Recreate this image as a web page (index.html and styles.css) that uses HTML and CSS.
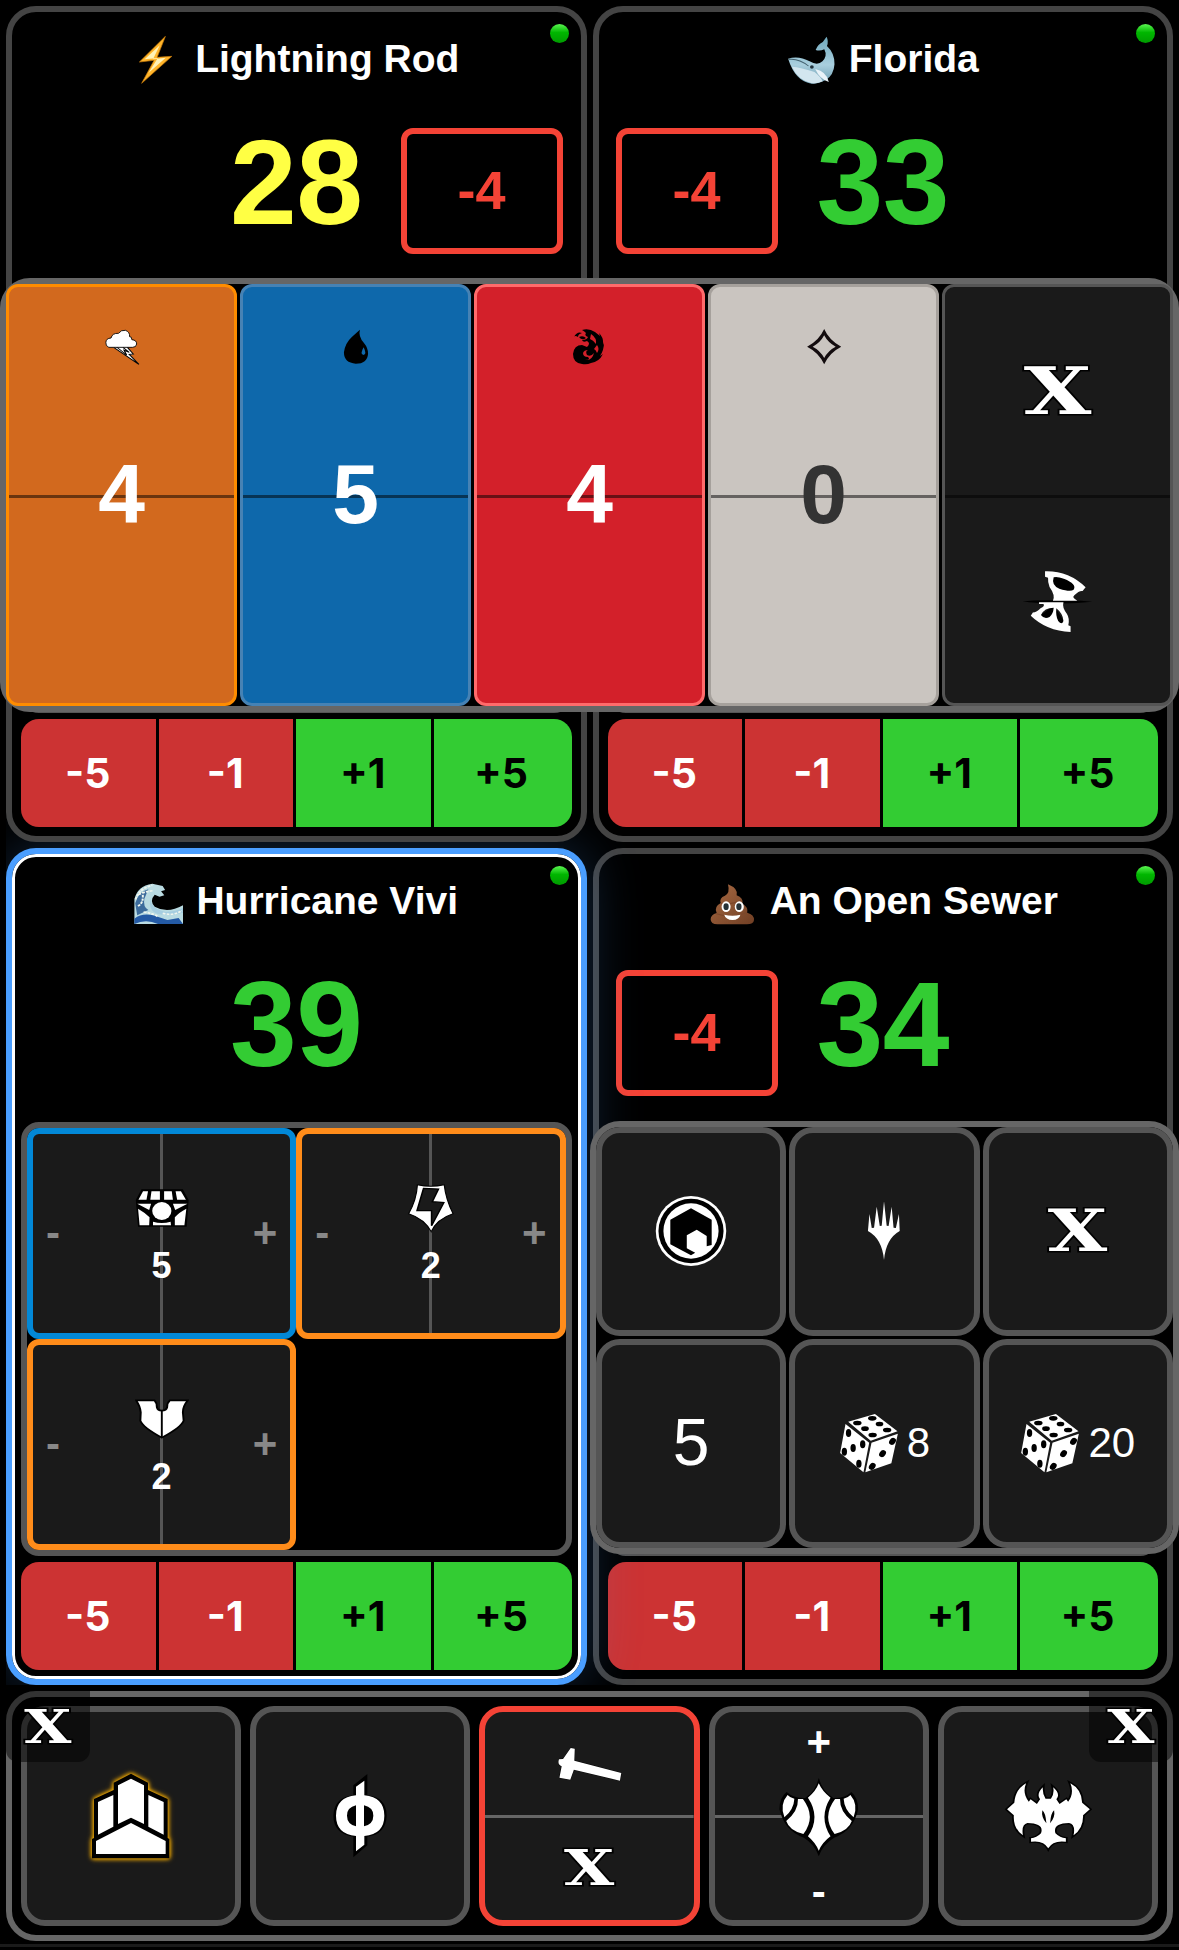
FILE: index.html
```html
<!DOCTYPE html>
<html lang="en">
<head>
<meta charset="utf-8">
<title>Life Counter</title>
<link rel="stylesheet" href="styles.css">
</head>
<body>
<div class="page">
  <main class="table">
    <section class="panel front">
      <span class="status"></span>
      <header class="name">
        <svg class="emoji" viewBox="358 108 130 144" preserveAspectRatio="none"><path d="M444 109L375 186L414 181L381 250L461 169L422 172Z" fill="#ffb52b" stroke="#c87a08" stroke-width="2"/><path d="M429 136L389 178L424 174L399 219L445 173L411 178Z" fill="#fff3b8"/></svg>
        <span>Lightning Rod</span>
      </header>
      <div class="life-row"><b class="life warn">28</b><div class="delta right">-4</div></div>
      <div class="counters"></div>
      <div class="controls"><button class="minus">-5</button><button class="minus">-1</button><button class="plus">+1</button><button class="plus">+5</button></div>
    </section>

    <section class="panel front">
      <span class="status"></span>
      <header class="name">
        <svg class="emoji" viewBox="523 108 130 144" preserveAspectRatio="none">
          <defs><linearGradient id="whale" x1="0" y1="0" x2="0" y2="1"><stop offset="0" stop-color="#6fa9bd"/><stop offset=".6" stop-color="#a9cfde"/><stop offset="1" stop-color="#6d9cb0"/></linearGradient></defs>
          <path d="M526 176Q554 166 583 184Q604 198 617 184Q631 168 622 148Q610 154 599 150Q604 134 618 126L628 110Q634 124 629 138Q650 160 649 193Q647 226 626 240Q606 252 588 251Q545 244 526 176Z" fill="url(#whale)"/>
          <path d="M536 200Q560 202 596 216Q612 230 618 244Q604 252 588 250Q552 240 536 200Z" fill="#d3e6ef"/>
          <path d="M527 178Q554 174 580 198" fill="none" stroke="#42616e" stroke-width="3"/><circle cx="589" cy="201" r="5" fill="#20323c"/>
          <path d="M598 207Q628 214 634 246Q610 238 598 207Z" fill="#e9f2f8"/>
        </svg>
        <span>Florida</span>
      </header>
      <div class="life-row"><div class="delta left">-4</div><b class="life good">33</b></div>
      <div class="counters"></div>
      <div class="controls"><button class="minus">-5</button><button class="minus">-1</button><button class="plus">+1</button><button class="plus">+5</button></div>
    </section>

    <section class="panel active">
      <span class="status"></span>
      <header class="name">
        <svg class="emoji" viewBox="340 600 123 144" preserveAspectRatio="none">
          <path d="M341 738V664Q348 624 386 617L412 624L418 636L408 640L416 652L404 656L392 650Q378 668 392 686Q424 708 463 682V738Z" fill="#b9dbe2"/>
          <path d="M343 676Q352 640 376 634L366 662Q362 686 376 696L348 712Z" fill="#3d6c9c"/>
          <path d="M382 660Q380 692 420 702Q446 700 463 690V704Q430 716 400 708Q374 698 382 660Z" fill="#a5cde0"/>
          <path d="M341 722Q360 704 388 712L424 726L452 720L463 738H400Q370 722 341 738Z" fill="#245aa5"/>
          <path d="M344 664Q354 630 386 622M350 684Q364 676 362 650M364 702Q388 706 400 716M412 706Q440 714 460 698M352 650Q366 640 390 638" fill="none" stroke="#f0f6ee" stroke-width="5" stroke-dasharray="7 3"/>
        </svg>
        <span>Hurricane Vivi</span>
      </header>
      <div class="life-row"><b class="life good">39</b></div>
      <div class="counters">
        <div class="counter blue"><i>-</i><div class="count">
          <svg viewBox="353 210 141 162" preserveAspectRatio="none">
            <path d="M370 235H478L493 267L488 347H361L355 267Z"/>
            <g fill="#fff"><path d="M374 241H387L383 266H362ZM396 241H418V266H393ZM429 241H449L452 266H429ZM459 241H473L486 266H463Z"/><path d="M359 278H395L390 297ZM452 278H490L458 297ZM361 293Q378 304 391 319L390 343H365ZM487 293Q468 304 457 319V343H482ZM400 332Q423 340 446 332L447 343H400Z"/><ellipse cx="423" cy="300" rx="25" ry="27"/></g>
          </svg><b>5</b></div><i>+</i></div>
        <div class="counter orange"><i>-</i><div class="count">
          <svg viewBox="1054 216 141 162" preserveAspectRatio="none">
            <path d="M1089 227Q1124 236 1159 227Q1163 270 1182 314Q1140 330 1125 368Q1108 330 1066 314Q1087 272 1089 227Z" fill="#fff" stroke="#000" stroke-width="3"/>
            <path d="M1105 238L1144 240L1128 278L1158 281L1126 350V305H1088Z" fill="#1a1a1a" stroke="#000" stroke-width="4"/>
          </svg><b>2</b></div><i>+</i></div>
        <div class="counter orange"><i>-</i><div class="count">
          <svg viewBox="353 153 141 162" preserveAspectRatio="none">
            <path d="M356 178H404Q410 185 410 198Q412 209 423 209Q435 209 437 198Q437 185 444 178H491Q478 196 478 214L480 239Q474 258 423 290Q373 258 367 239L368 214Q367 196 356 178Z" fill="#fff" stroke="#000" stroke-width="5"/>
            <path d="M423 208V291" stroke="#000" stroke-width="5"/>
          </svg><b>2</b></div><i>+</i></div>
      </div>
      <div class="controls"><button class="minus">-5</button><button class="minus">-1</button><button class="plus">+1</button><button class="plus">+5</button></div>
    </section>

    <section class="panel">
      <span class="status"></span>
      <header class="name">
        <svg class="emoji" viewBox="313 530 130 144" preserveAspectRatio="none">
          <defs><linearGradient id="pile" x1="0" y1="0" x2="1" y2="1"><stop offset="0" stop-color="#a86a43"/><stop offset="1" stop-color="#713f24"/></linearGradient></defs>
          <path d="M366 549Q394 562 389 582Q408 590 404 607Q420 616 417 634Q436 640 435 656Q434 669 416 669H338Q320 669 320 654Q320 640 336 635Q328 616 347 605Q342 590 358 583Q372 576 366 549Z" fill="url(#pile)"/>
          <path d="M346 606Q374 612 402 596M335 637Q376 652 416 634" fill="none" stroke="#7c472b" stroke-width="3"/>
          <ellipse cx="361" cy="616" rx="12" ry="16" fill="#fff"/><ellipse cx="396" cy="616" rx="12" ry="16" fill="#fff"/>
          <ellipse cx="361" cy="616" rx="7" ry="10" fill="#263238"/><ellipse cx="395" cy="616" rx="7" ry="10" fill="#263238"/>
          <path d="M356 640Q378 646 399 640Q396 655 378 656Q360 655 356 640Z" fill="#fff"/>
        </svg>
        <span>An Open Sewer</span>
      </header>
      <div class="life-row"><div class="delta left">-4</div><b class="life good">34</b></div>
      <div class="counters"></div>
      <div class="controls"><button class="minus">-5</button><button class="minus">-1</button><button class="plus">+1</button><button class="plus">+5</button></div>
    </section>
  </main>

  <div class="mana overlay">
    <div class="pool storm">
      <svg viewBox="275 178 97 108" preserveAspectRatio="none"><path d="M298 232L369 284L346 256L355 254L338 232Z" fill="#fff"/><path d="M301 233L369 284L343 254L354 253L338 233M309 232L336 256L329 242L343 248L326 233" fill="none" stroke="#000" stroke-width="3"/><path d="M288 233Q279 229 280 219Q280 206 294 205Q297 190 314 191Q321 180 333 182Q345 187 344 201Q350 200 350 210Q363 211 363 223Q362 233 352 233Z" fill="#fff" stroke="#000" stroke-width="2.5"/></svg>
      <b>4</b></div>
    <div class="pool water">
      <svg viewBox="898 178 97 108" preserveAspectRatio="none"><path d="M957 180Q952 200 968 220Q979 235 979 252Q977 282 946 282Q914 280 914 248Q917 220 936 201Z"/><path d="M967 233Q977 255 966 256Q957 253 967 233Z" fill="#0e68ab"/></svg>
      <b>5</b></div>
    <div class="pool fire">
      <svg viewBox="2 0 36 36"><path d="M4 8Q7 2 12 4Q8 5 8 8Q5 6 4 8ZM12 1Q19 -1 25 3L30 7L29 4Q34 9 33 16L34 14Q34 21 30 27L33 25Q29 33 21 34Q17 36 12 35Q3 34 3 25Q4 16 12 16L17 18Q21 14 17 12Q13 14 12 11Q17 11 18 8Q14 7 16 4Q14 2 12 1ZM9 8Q13 6 16 9Q12 12 9 8Z"/><path d="M21 5Q27 9 26 15Q23 11 20 10ZM18 21Q15 22 17 26Q21 28 24 24Q22 32 15 31Q21 31 18 28Q13 28 13 24Q14 21 18 21ZM27 16Q30 20 27 24Q26 21 24 20Z" fill="#d3202a"/></svg>
      <b>4</b></div>
    <div class="pool plain">
      <svg viewBox="574 178 97 108" preserveAspectRatio="none"><path fill-rule="evenodd" d="M623 178Q637 213 669 231Q637 249 623 284Q609 249 577 231Q609 213 623 178ZM623 197Q612 220 592 231Q612 242 623 265Q634 242 654 231Q634 220 623 197Z" fill="#130c0e"/></svg>
      <b>0</b></div>
    <div class="pool actions">
      <div class="half"><span class="close x-lg">X</span></div>
      <div class="half"><svg class="hourglass" viewBox="1140 890 213 210" preserveAspectRatio="none">
        <path d="M1152 993Q1190 988 1250 990Q1300 988 1338 994Q1290 1000 1245 999Q1190 1000 1152 993Z"/>
        <path d="M1225 918L1290 930L1300 960L1250 975ZM1195 1040L1235 1005L1272 1070L1240 1075Z"/>
        <path fill-rule="evenodd" d="M1212 903Q1275 901 1320 951L1312 962Q1303 960 1290 975Q1282 982 1298 991H1233Q1240 975 1224 950Q1219 935 1220 922L1212 919ZM1235 921Q1228 945 1250 955Q1280 966 1288 958Q1298 941 1262 925Q1245 918 1235 921Z" fill="#fff"/>
        <path fill-rule="evenodd" d="M1196 996H1261Q1257 1012 1270 1030Q1278 1044 1274 1065L1280 1068V1085Q1215 1081 1174 1036L1180 1026Q1188 1028 1200 1014Q1212 1008 1208 1001H1196ZM1235 1012Q1210 1012 1201 1034Q1210 1048 1224 1040Q1234 1030 1235 1012ZM1242 1014Q1240 1038 1247 1052Q1257 1066 1261 1052Q1260 1030 1242 1014Z" fill="#fff"/>
      </svg></div>
    </div>
  </div>

  <div class="menu overlay">
    <div class="tile"><svg class="badge" viewBox="194 255 188 216" preserveAspectRatio="none"><ellipse cx="288" cy="363" rx="92" ry="105" fill="#fff"/><ellipse cx="288" cy="363" rx="85" ry="97"/><ellipse cx="288" cy="363" rx="72" ry="83" fill="#fff"/><path d="M288 295L342 329V405L329 409V378L303 359L277 376V415L299 428L288 436L234 403V329Z"/></svg></div>
    <div class="tile"><svg class="badge" viewBox="701 255 188 216" preserveAspectRatio="none"><path d="M795 274L802 347L807 348L815 290L820 353L826 354L834 312L836 363Q800 386 795 450Q790 386 753 363L757 312L763 354L769 353L776 290L784 348L789 347Z" fill="#fff"/></svg></div>
    <div class="tile"><span class="close x-md">X</span></div>
    <div class="tile big">5</div>
    <div class="tile"><svg class="dice" viewBox="676 252 157 180" preserveAspectRatio="none">
      <g id="die"><path d="M770 255L829 307L759 335L700 278ZM693 285L755 341L740 430L679 372ZM830 314L761 341L745 430L813 403Z" fill="#fff"/>
      <g><ellipse cx="763" cy="268" rx="11" ry="7"/><ellipse cx="724" cy="282" rx="11" ry="7"/><ellipse cx="782" cy="285" rx="10" ry="7"/><ellipse cx="744" cy="299" rx="10" ry="7"/><ellipse cx="802" cy="303" rx="11" ry="7"/><ellipse cx="764" cy="318" rx="11" ry="7"/>
      <ellipse cx="701" cy="312" rx="7" ry="12"/><ellipse cx="738" cy="346" rx="7" ry="12"/><ellipse cx="713" cy="357" rx="7" ry="12"/><ellipse cx="690" cy="368" rx="7" ry="12"/><ellipse cx="728" cy="404" rx="7" ry="12"/>
      <ellipse cx="816" cy="337" rx="8" ry="11" transform="rotate(30 816 337)"/><ellipse cx="790" cy="374" rx="8" ry="11" transform="rotate(30 790 374)"/><ellipse cx="763" cy="412" rx="8" ry="11" transform="rotate(30 763 412)"/></g></g></svg><span>8</span></div>
    <div class="tile"><svg class="dice" viewBox="676 252 157 180" preserveAspectRatio="none"><use href="#die"/></svg><span>20</span></div>
  </div>

  <nav class="bar">
    <div class="tile"><svg class="castle" viewBox="258 273 270 270" preserveAspectRatio="none"><path d="M393 281L444 308V330L503 357V474L508 477V535H276V477L282 474V357L341 330V308Z"/><path d="M393 296L432 316V432L393 413L354 432V316ZM294 366L340 345V440L294 464ZM491 366L445 345V440L491 464ZM393 429L497 483V522H288V483Z" fill="#fff"/></svg></div>
    <div class="tile"><svg viewBox="945 273 270 270" preserveAspectRatio="none"><path d="M1060 316L1102 282V346Q1160 352 1160 407Q1158 462 1102 470V496L1060 532V470Q1000 460 1000 407Q1002 352 1060 346Z"/><path fill-rule="evenodd" d="M1068 320L1093 302V346Q1153 352 1153 407Q1153 462 1093 468V494L1068 514V468Q1008 462 1008 407Q1008 352 1068 346ZM1068 376Q1041 382 1041 407Q1041 432 1068 439ZM1092 376V439Q1120 432 1120 407Q1120 382 1092 376Z" fill="#fff"/></svg></div>
    <div class="tile split alert">
      <div class="half"><svg class="hammer" viewBox="187 178 155 144" preserveAspectRatio="none"><path d="M224 202L233 204L232 240L336 277L333 300L231 267L223 297L199 291L204 257Q194 252 198 236L207 235Z" fill="#fff" stroke="#000" stroke-width="2" paint-order="stroke"/></svg></div>
      <div class="half"><span class="close x-sm">X</span></div>
    </div>
    <div class="tile steps"><b>+</b><svg viewBox="672 273 199 270" preserveAspectRatio="none">
      <path d="M771 290Q778 330 803 351Q830 352 843 333Q858 350 858 385Q848 450 805 470Q780 490 771 526Q762 490 738 470Q695 450 684 385Q684 350 700 333Q715 352 741 351Q765 330 771 290Z"/>
      <path d="M771 307Q779 332 797 350Q770 408 797 466Q779 484 771 509Q763 484 747 466Q776 408 747 350Q764 332 771 307Z" fill="#fff"/>
      <path d="M702 342Q708 351 717 353Q716 385 695 409Q684 370 702 342ZM841 342Q835 351 826 353Q827 385 848 409Q859 370 841 342Z" fill="#fff"/>
      <path d="M725 354H736Q766 408 737 459Q706 449 699 420Q726 390 725 354ZM818 354H807Q777 408 806 459Q837 449 844 420Q817 390 818 354Z" fill="#fff"/></svg><b>-</b></div>
    <div class="tile"><svg viewBox="1178 273 199 270" preserveAspectRatio="none"><path d="M1229 310Q1220 340 1235 365L1239 358L1253 372L1260 358Q1251 342 1266 322Q1265 342 1272 356H1284Q1292 342 1289 322Q1306 342 1296 358L1303 372L1318 358L1322 365Q1336 340 1327 310Q1352 328 1353 368L1370 388L1355 406Q1356 445 1334 466Q1339 433 1324 429Q1287 430 1294 460Q1304 474 1317 475V485Q1288 480 1278 505Q1268 480 1240 485V475Q1252 474 1262 460Q1270 430 1232 429Q1218 433 1222 466Q1200 445 1202 406L1187 388L1203 368Q1205 328 1229 310Z" fill="#fff" stroke="#000" stroke-width="8" paint-order="stroke"/><path d="M1265 391Q1272 398 1274 430Q1262 412 1265 391ZM1291 391Q1284 398 1282 430Q1294 412 1291 391Z"/></svg></div>
    <span class="corner start"><span class="close x-xs">X</span></span>
    <span class="corner end"><span class="close x-xs">X</span></span>
  </nav>
  <footer class="edge"></footer>
</div>
</body>
</html>
```
FILE: styles.css
```css
* { box-sizing: border-box; }
body { margin: 0; background: #000; color: #fff; font-family: "Liberation Sans", Arial, sans-serif; overflow: hidden; }
svg { display: block; flex: none; }
.page { position: relative; width: 1179px; height: 1950px; padding-top: 6px; overflow: hidden; }

.table { margin: 0 6px; height: 1679px; display: grid; grid-template-columns: 1fr 1fr; grid-template-rows: 836px 837px; gap: 6px; overflow: hidden; }
.panel { position: relative; display: flex; flex-direction: column; min-width: 0; padding: 22px 9px 9px; border: 6px solid #444; border-radius: 30px; background: #000; }
.front { z-index: 2; }
.active { z-index: 1; border-color: #4a9eff; box-shadow: inset 0 0 0 3px #fff, 0 0 54px rgba(74, 158, 255, .25); }
.status { position: absolute; top: 12px; right: 12px; width: 19px; height: 19px; border-radius: 50%; background: linear-gradient(#5cf552, #00b600 45%, #009b00); }

.name { display: flex; justify-content: center; align-items: center; gap: 13px; height: 50px; font-size: 39px; font-weight: 700; white-space: nowrap; }
.emoji { width: 49px; height: 48px; margin-top: 2px; }

.life-row { display: grid; grid-template-columns: 162px 1fr 162px; align-items: center; height: 126px; margin-top: 44px; padding: 0 8.5px; }
.life { grid-column: 2; grid-row: 1; margin-top: -18px; text-align: center; font-size: 120px; line-height: 126px; letter-spacing: -.5px; }
.warn { color: #ffff44; }
.good { color: #33cc33; }
.delta { grid-row: 1; display: flex; align-items: center; justify-content: center; height: 126px; padding: 0 1px 3px 0; border: 6px solid #f44336; border-radius: 12px; color: #f44336; font-size: 54px; font-weight: 700; }
.delta.left { grid-column: 1; }
.delta.right { grid-column: 3; }

.counters { flex: 1; min-height: 0; margin: 25.5px 0 6px; display: grid; grid-template-columns: 1fr 1fr; grid-template-rows: 1fr 1fr; border: 6px solid #555; border-radius: 18px; }
.counter { display: flex; align-items: center; justify-content: space-between; padding: 0 13px; border: 6px solid; border-radius: 12px; background: linear-gradient(#555, #555) center / 3px 100% no-repeat #1a1a1a; }
.counter i { width: 25px; margin-top: -2px; font-style: normal; font-weight: 700; font-size: 42px; line-height: 41px; color: #888; }
.counter i:last-child { text-align: right; }
.blue { border-color: #0288d7; }
.orange { border-color: #ff8c1a; }
.count { display: flex; flex-direction: column; align-items: center; gap: 10px; font-size: 36px; line-height: 41px; }
.count svg { width: 54px; height: 54px; }

.controls { display: flex; height: 108px; border-radius: 18px; overflow: hidden; }
.controls button { width: 137.5px; padding: 0 1px 0 0; border: 0 solid #000; border-right-width: 3px; font: 700 41px/1 Inter, sans-serif; }
.controls button:last-child { flex: 1; border-right-width: 0; padding-right: 3px; }
.minus { background: #cc3333; color: #fff; }
.plus { background: #33cc33; color: #000; }

.overlay { position: absolute; z-index: 10; display: grid; gap: 3px; border: 6px solid #666; border-radius: 30px; background: #000; }
.mana { left: 0; top: 278px; width: 1179px; height: 434px; grid-template-columns: repeat(5, 1fr); }
.pool { position: relative; display: flex; flex-direction: column; align-items: center; border: 3px solid; border-radius: 12px; background: linear-gradient(rgba(0, 0, 0, .5), rgba(0, 0, 0, .5)) 0 208px / 100% 3px no-repeat var(--fill); }
.pool > svg { width: 36px; height: 36px; margin-top: 42px; }
.pool b { margin-top: 81px; font-size: 84px; line-height: 96px; }
.storm { --fill: #d2691e; border-color: #ff8c00; }
.water { --fill: #0e68ab; border-color: #4682b4; }
.fire { --fill: #d3202a; border-color: #ff6b6b; }
.plain { --fill: #cac5c0; border-color: #a6a19c; color: #333; }
.actions { --fill: #1a1a1a; border-color: #555; }
.half { flex: 1; width: 100%; display: flex; align-items: center; justify-content: center; }
.hourglass { width: 80px; height: 70px; margin-top: 5px; }

.menu { left: 590px; top: 1121px; width: 589px; height: 433px; grid-template-columns: repeat(3, 1fr); grid-template-rows: 1fr 1fr; }
.tile { min-width: 0; display: flex; align-items: center; justify-content: center; gap: 8px; border: 6px solid #555; border-radius: 24px; background: #1a1a1a; font-size: 42px; }
.menu .tile { padding-bottom: 1px; }
.badge { width: 72px; height: 72px; }
.dice { width: 60px; height: 60px; }
.menu .big { font-size: 66px; padding-bottom: 3px; }

.close { font-family: "DejaVu Serif", serif; font-weight: 700; line-height: 1; -webkit-text-stroke: 3px #000; paint-order: stroke fill; transform: scaleX(1.32); }
.x-lg { font-size: 66px; }
.x-md { font-size: 58px; }
.x-sm { font-size: 49px; }
.x-xs { font-size: 46px; }

.bar { position: relative; display: grid; grid-template-columns: repeat(5, 1fr); gap: 9px; height: 250px; margin: 6px 6px 3px; padding: 9px; border: 6px solid #666; border-radius: 30px; }
.bar svg { width: 90px; height: 90px; }
.bar .castle { filter: drop-shadow(0 0 2px #ffb000) drop-shadow(0 0 2px #e0a000); }
.bar .hammer { width: 70px; height: 48px; }
.bar .split, .bar .steps { flex-direction: column; gap: 0; background: linear-gradient(#666, #666) center / 100% 3px no-repeat #1a1a1a; }
.bar .alert { border-color: #f44336; }
.bar .steps { justify-content: space-between; padding: 9px 0 8px; font-size: 42px; line-height: 41px; }
.corner { position: absolute; top: -6px; width: 84px; height: 71px; display: flex; padding-top: 13px; background: rgba(0, 0, 0, .5); border-radius: 0 0 12px 12px; }
.start { left: -6px; padding-left: 24px; }
.end { right: -6px; padding-left: 24px; }
.edge { height: 3px; background: #1a1a1a; }
```
